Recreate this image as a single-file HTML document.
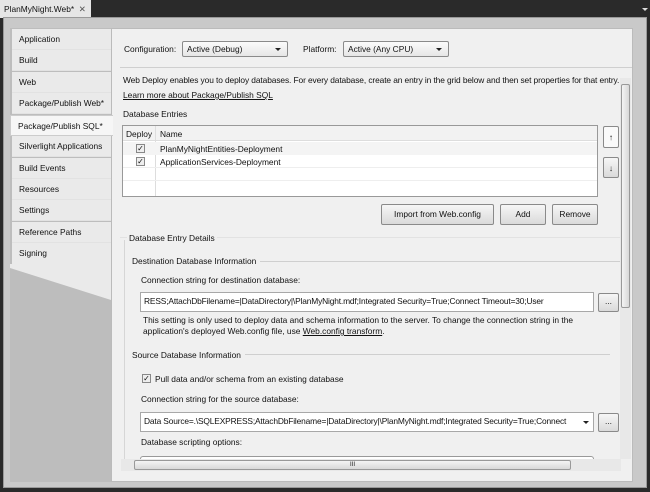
<!DOCTYPE html>
<html><head><style>
*{margin:0;padding:0;box-sizing:border-box}
body{width:650px;height:492px;background:#2a2a2a;position:relative;overflow:hidden;font-family:"Liberation Sans",sans-serif;font-size:8.4px;color:#111}
.a{position:absolute;white-space:nowrap}
.nav{position:absolute;left:12px;width:99px;height:21px;line-height:21px;padding-left:7px;border-bottom:1px solid #e2e2e2;background:#eaeaea}
.btn{position:absolute;border:1px solid #8a8a8a;border-radius:2px;background:linear-gradient(#f6f6f6,#dadada);text-align:center}
.sel{position:absolute;border:1px solid #8a8a8a;border-radius:2px;background:linear-gradient(#fbfbfb,#e6e6e6);padding-left:4px;line-height:14px}
.sel:after{content:"";position:absolute;right:6px;top:6px;border:3px solid transparent;border-top:3px solid #222}
.hl{position:absolute;height:1px;background:#cfcfcf}
.inp{position:absolute;background:#fff;border:1px solid #a8a8a8;padding-left:3px;line-height:17px;overflow:hidden;letter-spacing:-0.15px}
.cb{position:absolute;width:9px;height:9px;border:1px solid #888;background:#eee;font-size:8px;line-height:7px;text-align:center}
</style></head><body>
<div class="a" style="left:0;top:0;width:91px;height:18px;background:#e6e6e6;line-height:18px;padding-left:4px">PlanMyNight.Web* &nbsp;<span style="color:#555">✕</span></div>
<div class="a" style="left:642px;top:8px;border:3px solid transparent;border-top:3px solid #ddd"></div>
<div class="a" style="left:3px;top:17px;width:644px;height:471px;background:#c9c9c9;border:1px solid #999"></div>
<div class="a" style="left:10px;top:28px;width:101px;height:454px;background:#bdbdbd"></div>
<svg class="a" style="left:10px;top:264px" width="101" height="50"><polygon points="0,0 101,0 101,36 0,4" fill="#eaeaea"/></svg>
<div class="nav" style="top:29px">Application</div>
<div class="nav" style="top:50px">Build</div>
<div class="nav" style="top:72px">Web</div>
<div class="nav" style="top:93px">Package/Publish Web*</div>
<div class="nav" style="top:115px;left:10px;width:103px;background:#f6f6f6;z-index:2;border:1px solid #ccc;border-right:none">Package/Publish SQL*</div>
<div class="nav" style="top:136px">Silverlight Applications</div>
<div class="nav" style="top:158px">Build Events</div>
<div class="nav" style="top:179px">Resources</div>
<div class="nav" style="top:200px">Settings</div>
<div class="nav" style="top:222px">Reference Paths</div>
<div class="nav" style="top:243px;border:none;height:22px">Signing</div>
<div class="a" style="left:111px;top:28px;width:522px;height:454px;background:#f0f0f0;border:1px solid #bbb"></div>
<div class="a" style="left:124px;top:44px">Configuration:</div>
<div class="sel" style="left:182px;top:41px;width:106px;height:16px">Active (Debug)</div>
<div class="a" style="left:303px;top:44px">Platform:</div>
<div class="sel" style="left:343px;top:41px;width:106px;height:16px">Active (Any CPU)</div>
<div class="hl" style="left:120px;top:67px;width:512px"></div>
<div class="a" style="left:123px;top:75px;letter-spacing:-0.1px">Web Deploy enables you to deploy databases. For every database, create an entry in the grid below and then set properties for that entry.</div>
<div class="a" style="left:123px;top:90px;text-decoration:underline">Learn more about Package/Publish SQL</div>
<div class="a" style="left:123px;top:109px">Database Entries</div>
<div class="a" style="left:122px;top:125px;width:476px;height:72px;background:#fff;border:1px solid #999"></div>
<div class="a" style="left:123px;top:126px;width:474px;height:15px;background:#f2f2f2;border-bottom:1px solid #ddd"></div>
<div class="a" style="left:155px;top:126px;width:1px;height:70px;background:#ddd"></div>
<div class="a" style="left:126px;top:129px">Deploy</div>
<div class="a" style="left:160px;top:129px">Name</div>
<div class="a" style="left:123px;top:142px;width:474px;height:13px;background:#f4f4f4"></div>
<div class="hl" style="left:123px;top:167px;width:474px;background:#eee"></div>
<div class="hl" style="left:123px;top:180px;width:474px;background:#eee"></div>
<div class="cb" style="left:136px;top:144px">✓</div><div class="a" style="left:160px;top:144px">PlanMyNightEntities-Deployment</div>
<div class="cb" style="left:136px;top:157px">✓</div><div class="a" style="left:160px;top:157px">ApplicationServices-Deployment</div>
<div class="btn" style="left:603px;top:126px;width:16px;height:22px;line-height:20px;background:#fafafa;font-weight:bold">↑</div>
<div class="btn" style="left:603px;top:157px;width:16px;height:21px;line-height:20px;font-weight:bold">↓</div>
<div class="btn" style="left:381px;top:204px;width:113px;height:21px;line-height:19px">Import from Web.config</div>
<div class="btn" style="left:500px;top:204px;width:46px;height:21px;line-height:19px">Add</div>
<div class="btn" style="left:552px;top:204px;width:46px;height:21px;line-height:19px">Remove</div>
<div class="hl" style="left:120px;top:237px;width:500px;background:#e2e2e2"></div>
<div class="a" style="left:124px;top:240px;width:1px;height:220px;background:#d6d6d6"></div>
<div class="a" style="left:127px;top:233px;background:#f0f0f0;padding:0 2px">Database Entry Details</div>
<div class="hl" style="left:132px;top:261px;width:488px"></div>
<div class="a" style="left:132px;top:256px;background:#f0f0f0;padding-right:4px">Destination Database Information</div>
<div class="a" style="left:141px;top:275px">Connection string for destination database:</div>
<div class="inp" style="left:140px;top:292px;width:454px;height:20px">RESS;AttachDbFilename=|DataDirectory|\PlanMyNight.mdf;Integrated Security=True;Connect Timeout=30;User Instance=True</div>
<div class="btn" style="left:598px;top:293px;width:21px;height:19px;line-height:14px">...</div>
<div class="a" style="left:143px;top:315px;line-height:11px">This setting is only used to deploy data and schema information to the server. To change the connection string in the<br>application's deployed Web.config file, use <u>Web.config transform</u>.</div>
<div class="hl" style="left:132px;top:354px;width:478px"></div>
<div class="a" style="left:132px;top:350px;background:#f0f0f0;padding-right:4px">Source Database Information</div>
<div class="cb" style="left:142px;top:374px">✓</div>
<div class="a" style="left:155px;top:374px">Pull data and/or schema from an existing database</div>
<div class="a" style="left:141px;top:394px">Connection string for the source database:</div>
<div class="inp" style="left:140px;top:412px;width:454px;height:20px;padding-right:14px">Data Source=.\SQLEXPRESS;AttachDbFilename=|DataDirectory|\PlanMyNight.mdf;Integrated Security=True;Connect Timeout</div>
<div class="a" style="left:583px;top:421px;border:3px solid transparent;border-top:3px solid #222"></div>
<div class="btn" style="left:598px;top:413px;width:21px;height:19px;line-height:14px">...</div>
<div class="a" style="left:141px;top:437px">Database scripting options:</div>
<div class="a" style="left:140px;top:456px;width:454px;height:6px;border:1px solid #999;border-bottom:none;border-radius:3px 3px 0 0;background:#fff"></div>
<div class="a" style="left:121px;top:459px;width:500px;height:12px;background:#e8e8e8"></div>
<div class="a" style="left:134px;top:460px;width:437px;height:10px;border:1px solid #999;border-radius:2px;background:linear-gradient(#f4f4f4,#d8d8d8);text-align:center;font-size:6px;line-height:8px">III</div>
<div class="a" style="left:620px;top:78px;width:11px;height:381px;background:#e8e8e8"></div>
<div class="a" style="left:621px;top:84px;width:9px;height:224px;border:1px solid #999;border-radius:2px;background:linear-gradient(90deg,#f4f4f4,#d8d8d8)"></div>
</body></html>
